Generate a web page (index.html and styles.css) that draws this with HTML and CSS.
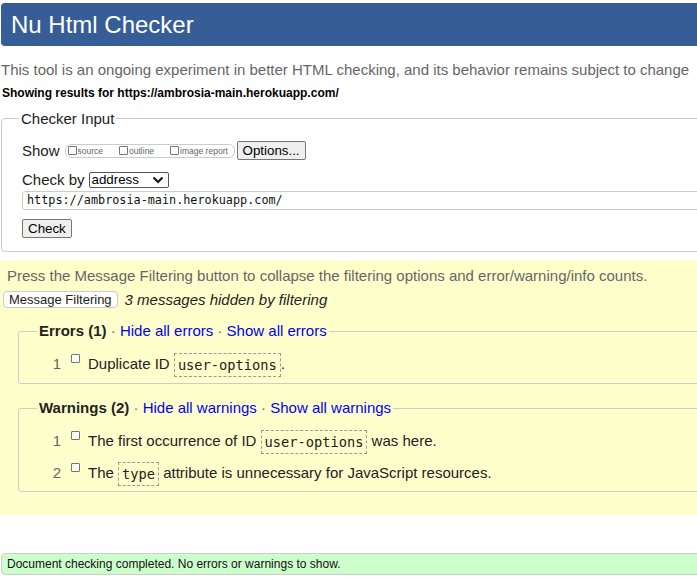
FILE: index.html
```html
<!DOCTYPE html>
<html lang="en">
<head>
<meta charset="utf-8">
<title>Nu Html Checker</title>
<link rel="stylesheet" href="styles.css">
</head>
<body>
<div class="page">
  <h1 class="title">Nu Html Checker</h1>
  <p class="intro">This tool is an ongoing experiment in better HTML checking, and its behavior remains subject to change</p>
  <p class="showing">Showing results for https://ambrosia-main.herokuapp.com/</p>

  <fieldset class="checker">
    <legend>Checker Input</legend>
    <div class="row show-row">
      <span class="label">Show</span>
      <span class="opts">
        <span class="opt"><span class="cb"></span>source</span>
        <span class="opt"><span class="cb"></span>outline</span>
        <span class="opt"><span class="cb"></span>image report</span>
      </span>
      <button class="btn options" type="button">Options...</button>
    </div>
    <div class="row by-row">
      <span class="label">Check by</span>
      <span class="select">address<svg class="chev" width="12" height="8" viewBox="0 0 12 8"><path d="M1.5 1.5 L6 6 L10.5 1.5" fill="none" stroke="#111" stroke-width="2"/></svg></span>
    </div>
    <div class="url">https://ambrosia-main.herokuapp.com/</div>
    <button class="btn check" type="button">Check</button>
  </fieldset>

  <section class="filters">
    <p class="hint">Press the Message Filtering button to collapse the filtering options and error/warning/info counts.</p>
    <div class="filter-row">
      <button class="mf" type="button">Message Filtering</button>
      <em class="hidden-count">3 messages hidden by filtering</em>
    </div>

    <fieldset class="group errors">
      <legend><b>Errors (1)</b> <span class="dot">·</span> <a href="#">Hide all errors</a> <span class="dot">·</span> <a href="#">Show all errors</a></legend>
      <ol class="msgs">
        <li><span class="num">1</span><span class="cb"></span><span class="msg">Duplicate ID <code>user-options</code>.</span></li>
      </ol>
    </fieldset>

    <fieldset class="group warnings">
      <legend><b>Warnings (2)</b> <span class="dot">·</span> <a href="#">Hide all warnings</a> <span class="dot">·</span> <a href="#">Show all warnings</a></legend>
      <ol class="msgs">
        <li><span class="num">1</span><span class="cb"></span><span class="msg">The first occurrence of ID <code>user-options</code> was here.</span></li>
        <li><span class="num">2</span><span class="cb"></span><span class="msg">The <code>type</code> attribute is unnecessary for JavaScript resources.</span></li>
      </ol>
    </fieldset>
  </section>

  <p class="success">Document checking completed. No errors or warnings to show.</p>
</div>
</body>
</html>
```
FILE: styles.css
```css
html, body {
  margin: 0;
  padding: 0;
  overflow: hidden;
  background: #fff;
}
body {
  font-family: "Liberation Sans", Arial, sans-serif;
  font-size: 15px;
  color: #222;
}
.page {
  width: 740px;
}
.title {
  margin: 3px 0 0 1px;
  height: 43px;
  padding: 0 0 0 10px;
  background: #365d95;
  color: #fff;
  font-size: 24px;
  font-weight: normal;
  line-height: 43px;
  border-radius: 4px 0 0 4px;
}
.intro {
  margin: 15px 0 0 1px;
  color: #666;
  line-height: 17px;
  white-space: nowrap;
}
.showing {
  margin: 8px 0 0 2px;
  font-size: 12px;
  font-weight: bold;
  line-height: 14px;
  color: #000;
}
.checker {
  margin: 10px 0 0 1px;
  padding: 0 0 13px 20px;
  border: 1px solid #ccc;
  border-radius: 4px;
  min-width: 0;
}
.checker legend {
  padding: 0 2px;
  margin-left: -3px;
  line-height: 17px;
}
.row {
  display: flex;
  align-items: center;
  height: 19px;
}
.show-row {
  margin-top: 14px;
}
.by-row {
  margin-top: 10px;
}
.label {
  margin-right: 5px;
}
.by-row .label {
  margin-right: 4px;
}
.opts {
  display: inline-flex;
  align-items: center;
  gap: 16px;
  box-sizing: border-box;
  height: 14px;
  width: 170px;
  padding: 0 2px;
  border: 1px solid #ccc;
  border-radius: 6px;
  font-size: 8.5px;
  color: #666;
}
.opt {
  display: inline-flex;
  align-items: center;
}
.opt .cb {
  margin-right: 1px;
}
.cb {
  display: inline-block;
  box-sizing: border-box;
  width: 9px;
  height: 9px;
  border: 1px solid #767676;
  border-radius: 1px;
  background: #fff;
  flex: none;
}
.btn {
  box-sizing: border-box;
  height: 19px;
  padding: 0 5px;
  font-family: "Liberation Sans", Arial, sans-serif;
  font-size: 13.33px;
  line-height: 17px;
  color: #000;
  background: #efefef;
  border: 1px solid #767676;
  border-radius: 2px;
}
.options {
  margin-left: 2px;
}
.select {
  display: inline-flex;
  align-items: center;
  justify-content: space-between;
  box-sizing: border-box;
  width: 80px;
  height: 16px;
  padding: 0 4px 0 2px;
  border: 1px solid #555;
  border-radius: 2px;
  font-size: 13.33px;
  color: #000;
}
.url {
  margin-top: 2px;
  box-sizing: border-box;
  height: 19px;
  padding: 0 4px;
  border: 1px solid #ccc;
  border-radius: 3px;
  font-family: "DejaVu Sans Mono", "Liberation Mono", monospace;
  font-size: 11.8px;
  line-height: 17px;
  color: #111;
}
.check {
  display: block;
  margin-top: 9px;
}
.filters {
  margin-top: 8px;
  padding: 7px 0 23px 0;
  background: #ffc;
}
.hint {
  margin: 0 0 0 7px;
  color: #666;
  line-height: 17px;
}
.filter-row {
  display: flex;
  align-items: center;
  margin: 7px 0 0 3px;
  height: 17px;
}
.mf {
  box-sizing: border-box;
  height: 17px;
  padding: 0 5px;
  font-family: "Liberation Sans", Arial, sans-serif;
  font-size: 13px;
  line-height: 15px;
  color: #222;
  background: #fff;
  border: 1px solid #ccc;
  border-radius: 4px;
}
.hidden-count {
  margin-left: 7px;
}
.group {
  margin: 14px 0 0 18px;
  padding: 0 0 7px 20px;
  border: 1px solid #ccc;
  border-radius: 3px;
  min-width: 0;
}
.warnings {
  margin-top: 15px;
  padding-bottom: 6px;
}
.group legend {
  padding: 0 2px;
  margin-left: -2px;
  line-height: 18px;
}
.group legend b {
  color: #222;
}
.dot {
  color: #666;
}
.group legend a {
  color: #00f;
  text-decoration: none;
}
.msgs {
  list-style: none;
  margin: 0;
  padding: 12px 0 0 0;
}
.warnings .msgs {
  padding-top: 12px;
}
.msgs li {
  display: flex;
  align-items: flex-start;
  height: 24px;
  line-height: 24px;
}
.msgs li + li {
  margin-top: 8px;
}
.num {
  width: 22px;
  text-align: right;
  color: #666;
}
.msgs .cb {
  margin: 2px 8px 0 10px;
}
.msg {
  white-space: nowrap;
}
code {
  display: inline-block;
  box-sizing: border-box;
  height: 24px;
  padding: 0 3px;
  border: 1px dashed #999;
  font-family: "DejaVu Sans Mono", "Liberation Mono", monospace;
  font-size: 13.7px;
  line-height: 22px;
  vertical-align: middle;
  color: #222;
}
.success {
  margin: 38px 0 0 1px;
  box-sizing: border-box;
  height: 22px;
  padding: 0 0 0 5px;
  background: #cfc;
  border: 1px solid #ccc;
  border-radius: 4px 0 0 4px;
  font-size: 12px;
  line-height: 20px;
  color: #111;
}
```
